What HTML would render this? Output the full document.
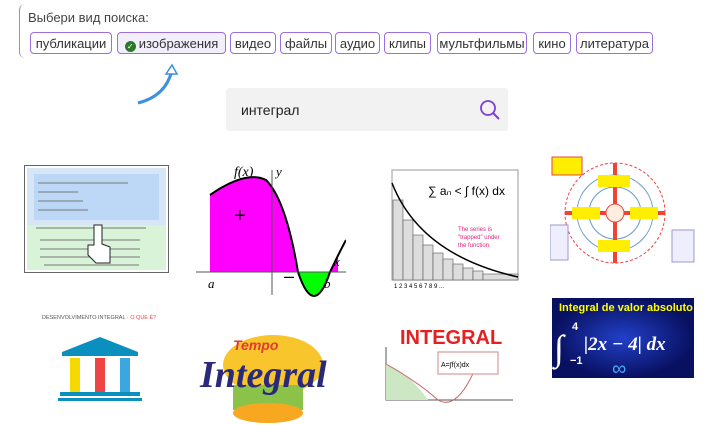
<!DOCTYPE html>
<html><head><meta charset="utf-8"><style>
body{margin:0;width:720px;height:425px;background:#fff;font-family:"Liberation Sans",sans-serif;position:relative;overflow:hidden}
.a{position:absolute}
.lbl{left:28px;top:10px;font-size:13px;color:#444}
.bl{left:19px;top:4px;width:6px;height:54px;border-left:1px solid #999;border-radius:6px 0 0 6px}
.chip{position:absolute;top:32px;height:22px;border:1px solid #9b6fe0;border-radius:4px;font-size:13px;color:#333;line-height:22px;text-align:center;box-sizing:border-box}
.sb{left:226px;top:88px;width:282px;height:43px;background:#f2f2f2;border-radius:3px}
</style></head><body>
<div class="a bl"></div>
<div class="a lbl">Выбери вид поиска:</div>
<div class="chip" style="left:30px;width:82px">публикации</div>
<div class="chip" style="left:117px;width:109px;background:#f3eefc"><span style="display:inline-block;width:11px;height:11px;border-radius:50%;background:#2a7a2a;color:#fff;font-size:8px;line-height:11px;vertical-align:-1px;margin-right:3px">✓</span>изображения</div>
<div class="chip" style="left:230px;width:46px">видео</div>
<div class="chip" style="left:280px;width:52px">файлы</div>
<div class="chip" style="left:335px;width:45px">аудио</div>
<div class="chip" style="left:384px;width:47px">клипы</div>
<div class="chip" style="left:437px;width:90px">мультфильмы</div>
<div class="chip" style="left:533px;width:38px">кино</div>
<div class="chip" style="left:576px;width:77px">литература</div>
<svg class="a" style="left:130px;top:60px" width="60" height="50"><path d="M8 43 Q36 36 42 10" stroke="#3d8fe0" stroke-width="3" fill="none"/><path d="M36 14 L42 5 L47 14 Z" fill="#fff" stroke="#3d8fe0" stroke-width="1.5"/></svg>
<div class="a sb"></div>
<div class="a" style="left:241px;top:102px;font-size:14px;color:#222">интеграл</div>
<svg class="a" style="left:478px;top:98px" width="24" height="24"><circle cx="10" cy="10" r="7" stroke="#7b3fd6" stroke-width="1.8" fill="none"/><path d="M15 15 L21 21" stroke="#7b3fd6" stroke-width="2"/></svg>

<svg class="a" style="left:24px;top:165px" width="145" height="108"><rect x="0.5" y="0.5" width="144" height="107" fill="#fff" stroke="#666"/><rect x="3" y="3" width="139" height="102" fill="#d7e6f7"/><rect x="3" y="60" width="139" height="45" fill="#d9f3d9"/><rect x="10" y="9" width="125" height="46" fill="#bcd8f6"/><g stroke="#777" stroke-width="1"><path d="M14 18h90M14 27h40M14 36h45M14 45h50M12 63h110M16 75h100M16 84h100M16 92h100M20 100h95"/></g><path d="M70 60v20h-6v10l8 8h14v-16l-8-3v-19z" fill="#fff" stroke="#222"/></svg>

<svg class="a" style="left:196px;top:160px" width="150" height="137"><path d="M14 35 Q50 10 70 20 Q90 40 102 112 L14 112Z" fill="#f0f"/><path d="M102 112 Q118 160 134 112Z" fill="#0f0"/><path d="M134 112 L142 95 L142 112Z" fill="#f0f"/><path d="M14 35 Q50 10 70 20 Q90 40 102 112 Q118 160 134 112 Q142 95 150 80" stroke="#000" stroke-width="2" fill="none"/><path d="M0 112h150M76 10v125" stroke="#555"/><text x="38" y="16" font-style="italic" font-family="Liberation Serif" font-size="14">f(x)</text><text x="80" y="16" font-style="italic" font-family="Liberation Serif" font-size="13">y</text><text x="12" y="128" font-style="italic" font-family="Liberation Serif" font-size="13">a</text><text x="128" y="128" font-style="italic" font-family="Liberation Serif" font-size="13">b</text><text x="138" y="106" font-style="italic" font-family="Liberation Serif" font-size="13">x</text><text x="38" y="62" font-size="20">+</text><text x="88" y="122" font-size="18">–</text></svg>

<svg class="a" style="left:380px;top:165px" width="142" height="125"><rect x="12" y="5" width="126" height="110" fill="#fff" stroke="#999"/><g fill="#ddd" stroke="#555" stroke-width=".6"><rect x="13" y="35" width="10" height="80"/><rect x="23" y="55" width="10" height="60"/><rect x="33" y="70" width="10" height="45"/><rect x="43" y="80" width="10" height="35"/><rect x="53" y="88" width="10" height="27"/><rect x="63" y="94" width="10" height="21"/><rect x="73" y="99" width="10" height="16"/><rect x="83" y="103" width="10" height="12"/><rect x="93" y="106" width="10" height="9"/><rect x="103" y="109" width="35" height="6"/></g><path d="M12 18 Q40 90 138 112" stroke="#000" stroke-width="1.5" fill="none"/><text x="48" y="30" font-size="12">∑ aₙ &lt; ∫ f(x) dx</text><text x="78" y="66" font-size="6" fill="#e0207a">The series is</text><text x="78" y="74" font-size="6" fill="#e0207a">"trapped" under</text><text x="78" y="82" font-size="6" fill="#e0207a">the function.</text><text x="14" y="123" font-size="6">1 2 3 4 5 6 7 8 9 ...</text></svg>

<svg class="a" style="left:550px;top:155px" width="146" height="115"><circle cx="65" cy="58" r="50" fill="none" stroke="#e44" stroke-dasharray="3 2"/><circle cx="65" cy="58" r="38" fill="none" stroke="#69c"/><circle cx="65" cy="58" r="26" fill="none" stroke="#69c"/><path d="M65 8v100M15 58h100" stroke="#e43" stroke-width="4"/><rect x="2" y="2" width="30" height="18" fill="#fe0" stroke="#e44"/><rect x="48" y="20" width="32" height="12" fill="#fe0"/><rect x="22" y="52" width="28" height="12" fill="#fe0"/><rect x="80" y="52" width="28" height="12" fill="#fe0"/><rect x="48" y="85" width="32" height="12" fill="#fe0"/><circle cx="65" cy="58" r="9" fill="#fed" stroke="#e44"/><rect x="122" y="75" width="22" height="32" fill="#eef" stroke="#99c"/><rect x="0" y="70" width="18" height="35" fill="#eef" stroke="#99c"/></svg>

<svg class="a" style="left:40px;top:312px" width="130" height="90"><text x="2" y="7" font-size="5.5" fill="#555">DESENVOLVIMENTO INTEGRAL · <tspan fill="#e44">O QUE É?</tspan></text><path d="M22 40 L60 25 L98 40Z" fill="#0a8fbf"/><rect x="22" y="40" width="76" height="4" fill="#0a8fbf"/><rect x="30" y="46" width="10" height="34" fill="#f5d800"/><rect x="55" y="46" width="10" height="34" fill="#e44"/><rect x="80" y="46" width="10" height="34" fill="#3ba6e0"/><rect x="20" y="80" width="80" height="4" fill="#0a8fbf"/><rect x="18" y="86" width="84" height="3" fill="#0a8fbf"/></svg>

<svg class="a" style="left:198px;top:325px" width="148" height="100"><ellipse cx="75" cy="40" rx="50" ry="30" fill="#f8c52c"/><rect x="35" y="60" width="70" height="25" fill="#8bc34a"/><ellipse cx="70" cy="88" rx="35" ry="10" fill="#f8a820"/><text x="35" y="25" font-size="14" fill="#e53935" font-style="italic" font-weight="bold">Tempo</text><text x="2" y="62" font-size="38" fill="#2b2a7a" font-weight="bold" font-style="italic" font-family="Liberation Serif">Integral</text></svg>

<svg class="a" style="left:378px;top:322px" width="140" height="82"><text x="22" y="22" font-size="20" font-weight="bold" fill="#e52020">INTEGRAL</text><path d="M8 25 V78 H135" stroke="#555" fill="none"/><path d="M8 42 V78 H50 Q30 50 8 42Z" fill="#cde6c3"/><path d="M8 42 Q40 60 60 78 Q80 90 100 40" stroke="#c66" fill="none"/><rect x="60" y="30" width="60" height="22" fill="#fff" stroke="#c88"/><text x="63" y="45" font-size="7">A=∫f(x)dx</text></svg>

<svg class="a" style="left:552px;top:298px" width="142" height="80"><rect width="142" height="80" fill="#0c1e8c"/><rect width="142" height="80" fill="url(#g)"/><defs><radialGradient id="g"><stop offset="0" stop-color="#2240c8"/><stop offset="1" stop-color="#081060"/></radialGradient></defs><text x="7" y="13" font-size="11" font-weight="bold" fill="#ff0">Integral de valor absoluto</text><text x="2" y="62" font-size="36" fill="#fff" font-family="Liberation Serif">∫</text><text x="20" y="32" font-size="11" fill="#fff" font-weight="bold">4</text><text x="18" y="66" font-size="11" fill="#fff" font-weight="bold">−1</text><text x="32" y="52" font-size="19" fill="#fff" font-weight="bold" font-style="italic" font-family="Liberation Serif">|2x − 4| dx</text><text x="60" y="77" font-size="20" fill="#4af">∞</text></svg>
</body></html>
